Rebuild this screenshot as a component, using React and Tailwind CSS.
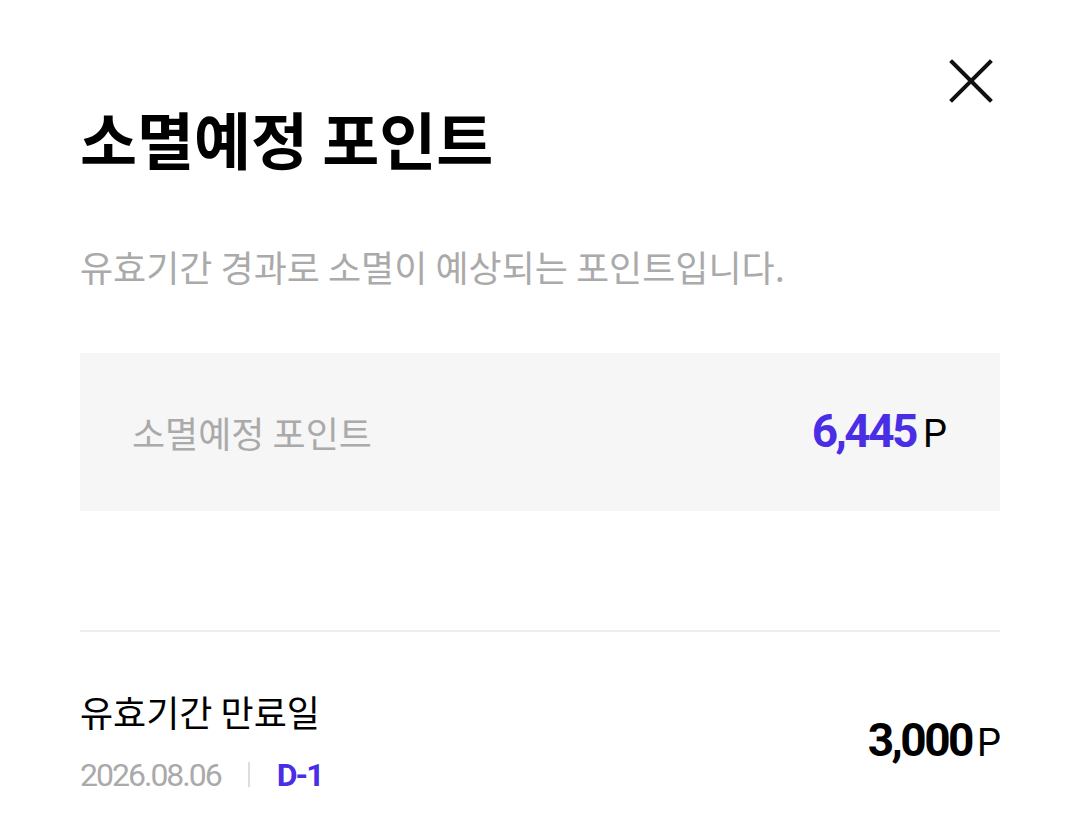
import { useState } from "react";

const kr = { fontFamily: "'Noto Sans CJK KR', 'Noto Sans', sans-serif" };
const num = { fontFamily: "Roboto, 'Liberation Sans', sans-serif" };

function CloseIcon() {
  return (
    <svg width="48" height="48" viewBox="0 0 48 48" fill="none">
      <path d="M5 5L43 43M43 5L5 43" stroke="#111111" strokeWidth="4" strokeLinecap="square" />
    </svg>
  );
}

export default function App() {
  const [open, setOpen] = useState(true);

  const expiring = 6445;
  const items = [{ date: "2026.08.06", dday: "D-1", amount: 3000 }];

  if (!open) return null;

  return (
    <div className="min-h-[835px] bg-white px-[80px] text-black" style={kr}>
      <div className="flex justify-end pt-[57px] pr-[5px]">
        <button type="button" onClick={() => setOpen(false)} aria-label="닫기">
          <CloseIcon />
        </button>
      </div>

      <h1 className="-mt-[4px] text-[62px] font-bold leading-[1.2]">소멸예정 포인트</h1>

      <p className="mt-[70px] text-[36px] leading-[1.2] text-[#aaaaaa]">
        유효기간 경과로 소멸이 예상되는 포인트입니다.
      </p>

      <div className="mt-[64px] flex h-[158px] items-center justify-between bg-[#f6f6f6] pl-[52px] pr-[54px]">
        <span className="text-[36px] text-[#aaaaaa]">소멸예정 포인트</span>
        <span className="flex items-baseline gap-[7px]" style={num}>
          <span className="text-[46px] font-bold tracking-[-2.5px] text-[#4a2ee6]">
            {expiring.toLocaleString("en-US")}
          </span>
          <span className="text-[38px] tracking-[-1px]">P</span>
        </span>
      </div>

      <div className="mt-[119px] h-[2px] bg-[#eeeeee]" />

      {items.map((item) => (
        <div key={item.date} className="flex items-center justify-between pt-[58px]">
          <div>
            <div className="text-[36px] leading-[1.2]">유효기간 만료일</div>
            <div className="mt-[26px] flex items-center text-[32px] leading-none tracking-[-2px]" style={num}>
              <span className="text-[#aaaaaa]">{item.date}</span>
              <span className="mx-[27px] h-[25px] w-[2px] bg-[#dddddd]" />
              <span className="font-bold text-[#4a2ee6]">{item.dday}</span>
            </div>
          </div>
          <div className="flex items-baseline gap-[5px]" style={num}>
            <span className="text-[46px] font-bold tracking-[-2.5px]">
              {item.amount.toLocaleString("en-US")}
            </span>
            <span className="text-[38px] tracking-[-1px]">P</span>
          </div>
        </div>
      ))}
    </div>
  );
}
